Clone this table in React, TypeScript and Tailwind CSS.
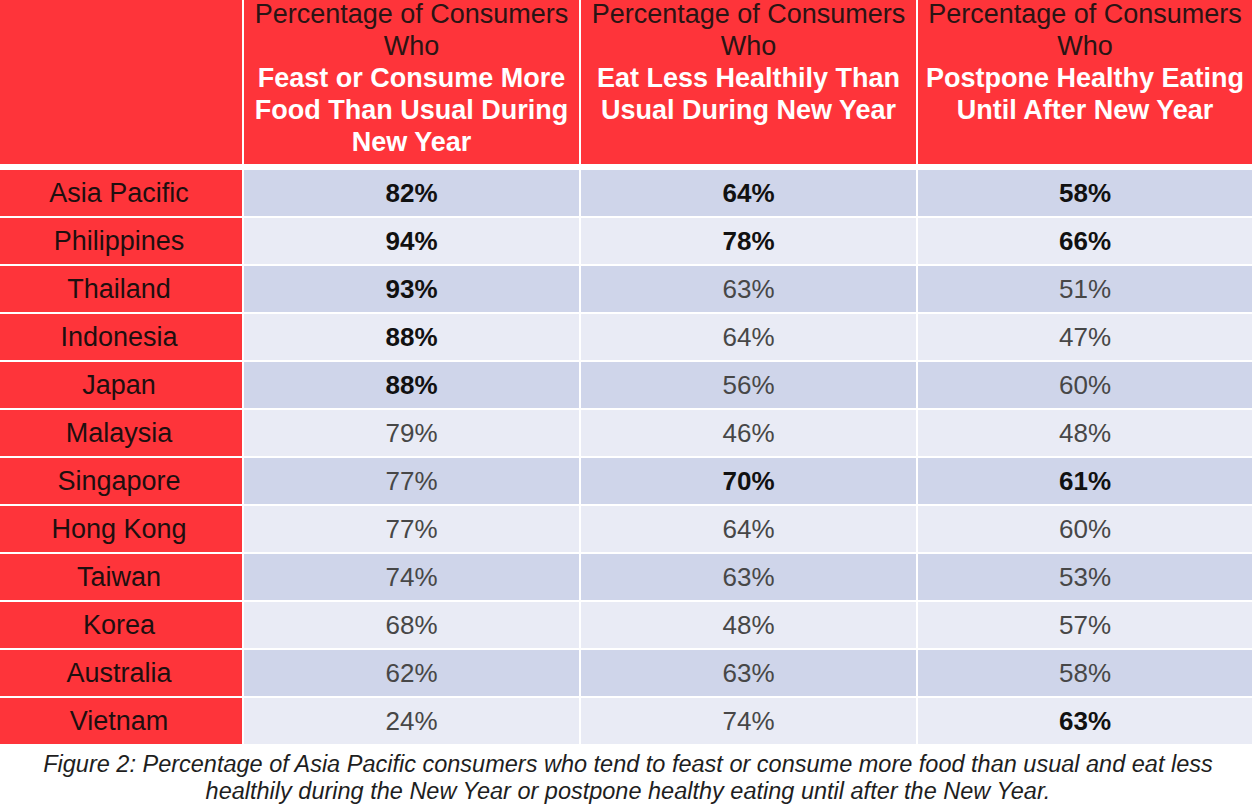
const rows: { name: string; v: [string, boolean][] }[] = [
  { name: "Asia Pacific", v: [["82%", true], ["64%", true], ["58%", true]] },
  { name: "Philippines", v: [["94%", true], ["78%", true], ["66%", true]] },
  { name: "Thailand", v: [["93%", true], ["63%", false], ["51%", false]] },
  { name: "Indonesia", v: [["88%", true], ["64%", false], ["47%", false]] },
  { name: "Japan", v: [["88%", true], ["56%", false], ["60%", false]] },
  { name: "Malaysia", v: [["79%", false], ["46%", false], ["48%", false]] },
  { name: "Singapore", v: [["77%", false], ["70%", true], ["61%", true]] },
  { name: "Hong Kong", v: [["77%", false], ["64%", false], ["60%", false]] },
  { name: "Taiwan", v: [["74%", false], ["63%", false], ["53%", false]] },
  { name: "Korea", v: [["68%", false], ["48%", false], ["57%", false]] },
  { name: "Australia", v: [["62%", false], ["63%", false], ["58%", false]] },
  { name: "Vietnam", v: [["24%", false], ["74%", false], ["63%", true]] },
];

const headers = [
  ["Feast or Consume More", "Food Than Usual During", "New Year"],
  ["Eat Less Healthily Than", "Usual During New Year"],
  ["Postpone Healthy Eating", "Until After New Year"],
];

export default function App() {
  return (
    <div className="h-[808px] w-[1252px] overflow-hidden bg-white font-['Liberation_Sans',Arial,sans-serif]">
      <div className="grid grid-cols-[242px_335px_335px_1fr] gap-x-[2px]">
        <div className="h-[164px] bg-[#fe343a]" />
        {headers.map((h, i) => (
          <div
            key={i}
            className="flex h-[164px] flex-col items-center bg-[#fe343a] text-center text-[27px] leading-[32px]"
          >
            <div className="-mt-[2px] flex flex-col items-center">
              <span className="whitespace-nowrap text-[#2b1414]">Percentage of Consumers</span>
              <span className="text-[#2b1414]">Who</span>
              {h.map((l) => (
                <span key={l} className="whitespace-nowrap font-bold text-white">
                  {l}
                </span>
              ))}
            </div>
          </div>
        ))}
      </div>
      <div className="mt-[6px] flex flex-col gap-y-[2px]">
        {rows.map((r, i) => (
          <div key={r.name} className="grid h-[46px] grid-cols-[242px_335px_335px_1fr] gap-x-[2px]">
            <div className="flex items-center justify-center bg-[#fe343a] pr-1 text-[27px] text-[#1e0f0f]">
              {r.name}
            </div>
            {r.v.map(([val, bold], j) => (
              <div
                key={j}
                className={`flex items-center justify-center text-[26px] ${
                  i % 2 === 0 ? "bg-[#cfd5ea]" : "bg-[#e9ebf5]"
                } ${bold ? "font-bold text-[#111111]" : "text-[#474747]"}`}
              >
                {val}
              </div>
            ))}
          </div>
        ))}
      </div>
      <p className="mt-[7px] pl-1 text-center text-[23.5px] leading-[27px] whitespace-nowrap italic text-[#1e1e1e]">
        Figure 2: Percentage of Asia Pacific consumers who tend to feast or consume more food than usual and eat less
        <br />
        healthily during the New Year or postpone healthy eating until after the New Year.
      </p>
    </div>
  );
}
